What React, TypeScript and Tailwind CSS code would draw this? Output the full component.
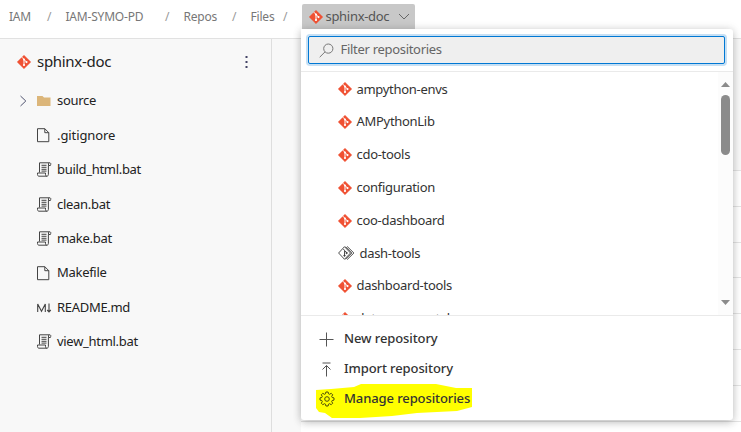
import React from "react";

type Kind = "file" | "script" | "markdown" | "folder";

function GitIcon({ size = 14 }: { size?: number }) {
  return (
    <svg width={size} height={size} viewBox="0 0 14 14" className="shrink-0">
      <path d="M7 .2 13.8 7 7 13.8.2 7Z" fill="#f05133" stroke="#f05133" strokeWidth=".4" strokeLinejoin="round" />
      <path d="M4.9 2.2 7 4.4v6M7.2 4.7l2.4 2.4" stroke="#fff" strokeWidth="1" fill="none" />
      <circle cx="7" cy="4.6" r="1" fill="#fff" />
      <circle cx="7" cy="10" r="1.05" fill="#fff" />
      <circle cx="9.5" cy="7.1" r="1.05" fill="#fff" />
    </svg>
  );
}

function ForkIcon() {
  return (
    <svg width="17" height="14" viewBox="0 0 17 14" fill="none" stroke="#3a3a3a" strokeWidth=".9" className="shrink-0">
      <path d="M6.5.7 12.5 7l-6 6.3L.6 7ZM9 .7h.4L15.900 7 9.400 13.300H9M7.500.7l6.300 6.300-6.300 6.300" />
      <path d="M5.300 3 6.500 4.300v5.500M6.700 4.600l2 2.200" />
      <circle cx="6.500" cy="9.600" r=".7" fill="#3a3a3a" />
      <circle cx="8.600" cy="7" r=".7" fill="#3a3a3a" />
    </svg>
  );
}

function FileIcon({ kind }: { kind: Kind }) {
  if (kind === "folder")
    return (
      <svg width="14" height="12" viewBox="0 0 14 12">
        <path d="M0 1h5.500l1.500 1.500h6.500V11H0Z" fill="#dcb67a" />
      </svg>
    );
  if (kind === "markdown")
    return (
      <svg width="15" height="12" viewBox="0 0 15 12" fill="none" stroke="#444" strokeWidth="1.100">
        <path d="M.7 10V2l3.800 7.300L8.300 2v8M12 1.500v8M10.200 8l1.800 1.900L13.800 8" />
      </svg>
    );
  if (kind === "script")
    return (
      <svg width="15" height="15" viewBox="0 0 15 15" fill="none" stroke="#444" strokeWidth="1">
        <path d="M2.500 10.500v-9.700h10.200c.8 0 1.300.8 1 1.700l-.3 1h-2v9c0 1-.7 1.700-1.500 1.700H2c-1 0-1.500-.8-1.500-1.700v-1.500h8v1.500c0 1 .5 1.700 1.300 1.700M11.500 3.500V2c0-.7.300-1.200.9-1.200" />
        <path d="M4.500 3.300h5M4.500 5.300h5M4.500 7.300h5M4.500 9.100h5" />
      </svg>
    );
  return (
    <svg width="13" height="15" viewBox="0 0 13 15" fill="none" stroke="#444" strokeWidth="1">
      <path d="M.5.7h7.300l4 4v9H.5ZM7.800.7v4h4" />
    </svg>
  );
}

const crumbs: [string, string][] = [
  ["IAM", "w-[56.500px]"],
  ["IAM-SYMO-PD", "w-[118px]"],
  ["Repos", "w-[67px]"],
  ["Files", "w-[51px]"],
];

const files: [string, Kind, string][] = [
  ["source", "folder", "tracking-[-0.300px]"],
  [".gitignore", "file", "tracking-[-0.100px]"],
  ["build_html.bat", "script", "tracking-[-0.300px]"],
  ["clean.bat", "script", "tracking-[-0.300px]"],
  ["make.bat", "script", "tracking-[-0.300px]"],
  ["Makefile", "file", "tracking-[-0.300px]"],
  ["README.md", "markdown", "tracking-[-0.300px]"],
  ["view_html.bat", "script", "tracking-[-0.300px]"],
];

const repos: [string, string][] = [
  ["ampython-envs", "tracking-[-0.300px]"],
  ["AMPythonLib", "tracking-[-0.300px]"],
  ["cdo-tools", "tracking-[-0.300px]"],
  ["configuration", "tracking-[-0.300px]"],
  ["coo-dashboard", "tracking-[-0.300px]"],
  ["dash-tools", "tracking-[-0.300px]"],
  ["dashboard-tools", "tracking-[-0.300px]"],
  ["data-xray-portal", "tracking-[-0.300px]"],
];

function GearIcon() {
  return (
    <svg width="16" height="16" viewBox="0 0 16 16" fill="none" stroke="#4d4c0c" strokeWidth="1">
      <path d="M6.900 1h2.200l.4 1.800 1.100.5 1.600-1 1.500 1.500-1 1.600.5 1.100 1.800.4v2.200l-1.800.4-.5 1.100 1 1.600-1.500 1.500-1.600-1-1.100.5L9.100 15H6.900l-.4-1.800-1.100-.5-1.600 1-1.500-1.500 1-1.600-.5-1.100L1 9.100V6.900l1.800-.4.5-1.100-1-1.600 1.500-1.500 1.600 1 1.100-.5Z" />
      <circle cx="8" cy="8" r="2.300" />
    </svg>
  );
}

function RepositoryMenu() {
  return (
    <div className="absolute left-[301px] top-[29px] flex h-[391px] w-[432px] flex-col rounded-b-[3px] rounded-tr-[3px] bg-white shadow-[0_3px_8px_rgba(0,0,0,0.18),0_0_10px_rgba(0,0,0,0.12)]">
      <div className="h-[43px] shrink-0 border-b border-[#eaeaea] pl-[7px] pt-[7px]">
        <div className="flex h-[28px] w-[417px] items-center rounded-[2px] border border-[#0078d4] bg-[#efefef] pl-[10px] shadow-[0_0_0_2px_#c7e0f4]">
          <svg width="15" height="15" viewBox="0 0 15 15" fill="none" stroke="#777" strokeWidth="1">
            <circle cx="9.300" cy="5.600" r="4.600" />
            <path d="M6 8.900.7 14.200" />
          </svg>
          <span className="ml-[6.500px] text-[13px] tracking-[-0.300px] text-[#666]">Filter repositories</span>
        </div>
      </div>
      <div className="flex h-[243px] shrink-0 overflow-hidden">
        <div className="flex-1 pl-[37px] pt-[1px]">
          {repos.map(([name, cls]) => (
            <div key={name} className="flex h-[32.800px] items-center">
              {name === "dash-tools" ? <ForkIcon /> : <GitIcon />}
              <span className={"ml-[4.500px] text-[13px] text-[#333] " + cls}>{name}</span>
            </div>
          ))}
        </div>
        <div className="flex w-[15px] flex-col items-center bg-[#fcfcfc] pt-[10px]">
          <svg width="9" height="5" viewBox="0 0 9 5"><path d="M4.500 0 9 5H0Z" fill="#8b8b8b" /></svg>
          <div className="mt-[8px] h-[60px] w-[9px] rounded-full bg-[#8b8b8b]" />
          <svg width="9" height="5" viewBox="0 0 9 5" className="mt-[145px]"><path d="M0 0h9L4.500 5Z" fill="#8b8b8b" /></svg>
        </div>
      </div>
      <div className="relative flex-1 border-t border-[#eaeaea] pl-[18px] pt-[8px] text-[13px] font-medium text-[#333]">
        <svg className="absolute left-[14px] top-[67px]" width="160" height="36" viewBox="0 0 160 36">
          <path d="M1 7 16 6 39 4 46 1h75l20 4h16v19l-15 4-40 2-25 3-32 2H17L10 30 4 29 1 25Z" fill="#ff0" />
        </svg>
        <div className="relative flex h-[30px] items-center">
          <svg width="15" height="15" viewBox="0 0 15 15" stroke="#555"><path d="M7.500.5v14M.5 7.500h14" /></svg>
          <span className="ml-[10px] tracking-[-0.100px]">New repository</span>
        </div>
        <div className="relative flex h-[30px] items-center">
          <svg width="15" height="15" viewBox="0 0 15 15" fill="none" stroke="#555"><path d="M3.500 1h8M7.500 3.500v11M3.500 7.500l4-4 4 4" /></svg>
          <span className="ml-[10px] tracking-[-0.100px]">Import repository</span>
        </div>
        <div className="relative flex h-[29px] items-center">
          <GearIcon />
          <span className="ml-[9px] tracking-[-0.100px]">Manage repositories</span>
        </div>
      </div>
    </div>
  );
}

export default function App() {
  return (
    <div className="relative flex h-[432px] w-[741px] flex-col overflow-hidden bg-white font-['Noto_Sans','Open_Sans',sans-serif]">
      <header className="flex h-[39px] shrink-0 border-b border-[#e1e1e1] pl-[9px] text-[12px] text-[#777]">
        {crumbs.map(([name, width]) => (
          <div key={name} className={"flex h-[34px] shrink-0 items-center justify-between " + width}>
            <span className="tracking-[-0.200px]">{name}</span>
            <span className="mr-[14px] text-[#999]">/</span>
          </div>
        ))}
        <div className="mt-[4px] flex h-[25px] w-[113px] items-center rounded-t-[2px] bg-[#c8c8c8] pl-[7px]">
          <GitIcon size={14} />
          <span className="ml-[3px] text-[13px] tracking-[-0.300px] text-[#555]">sphinx-doc</span>
          <svg className="ml-[9px]" width="12" height="8" viewBox="0 0 12 8" fill="none" stroke="#666"><path d="m1 1 5 5 5-5" /></svg>
        </div>
      </header>
      <div className="flex flex-1 bg-[#f8f8f8]">
        <aside className="w-[272px] shrink-0 border-r border-[#dedede]">
          <div className="flex h-[45px] items-center pl-[17px]">
            <GitIcon />
            <span className="ml-[6px] text-[15px] tracking-[-0.300px] text-[#222]">sphinx-doc</span>
            <svg className="ml-auto mr-[23px]" width="3" height="13" viewBox="0 0 3 13" fill="#444466">
              <path d="M.5 1h2v2h-2ZM.5 6h2v2h-2ZM.5 11h2v2h-2Z" />
            </svg>
          </div>
          {files.map(([name, kind, cls]) => (
            <div key={name} className="flex h-[34.400px] items-center">
              <div className="w-[37px] pl-[20px]">
                {kind === "folder" && (
                  <svg width="7" height="12" viewBox="0 0 7 12" fill="none" stroke="#505470"><path d="m.5 1 5.300 5-5.300 5" /></svg>
                )}
              </div>
              <div className="w-[20px]"><FileIcon kind={kind} /></div>
              <span className={"text-[13px] text-[#222] " + cls}>{name}</span>
            </div>
          ))}
        </aside>
        <main className="flex flex-1 flex-col bg-[#f8f8f8] pl-[29px] pt-[131px]">
          <div className="flex-1 border-t border-[#e4e4e4] bg-white">
            {[0, 1, 2, 3, 4, 5, 6].map((row) => (
              <div key={row} className="h-[35.800px] border-b border-[#e4e4e4]" />
            ))}
          </div>
        </main>
      </div>
      <RepositoryMenu />
    </div>
  );
}
